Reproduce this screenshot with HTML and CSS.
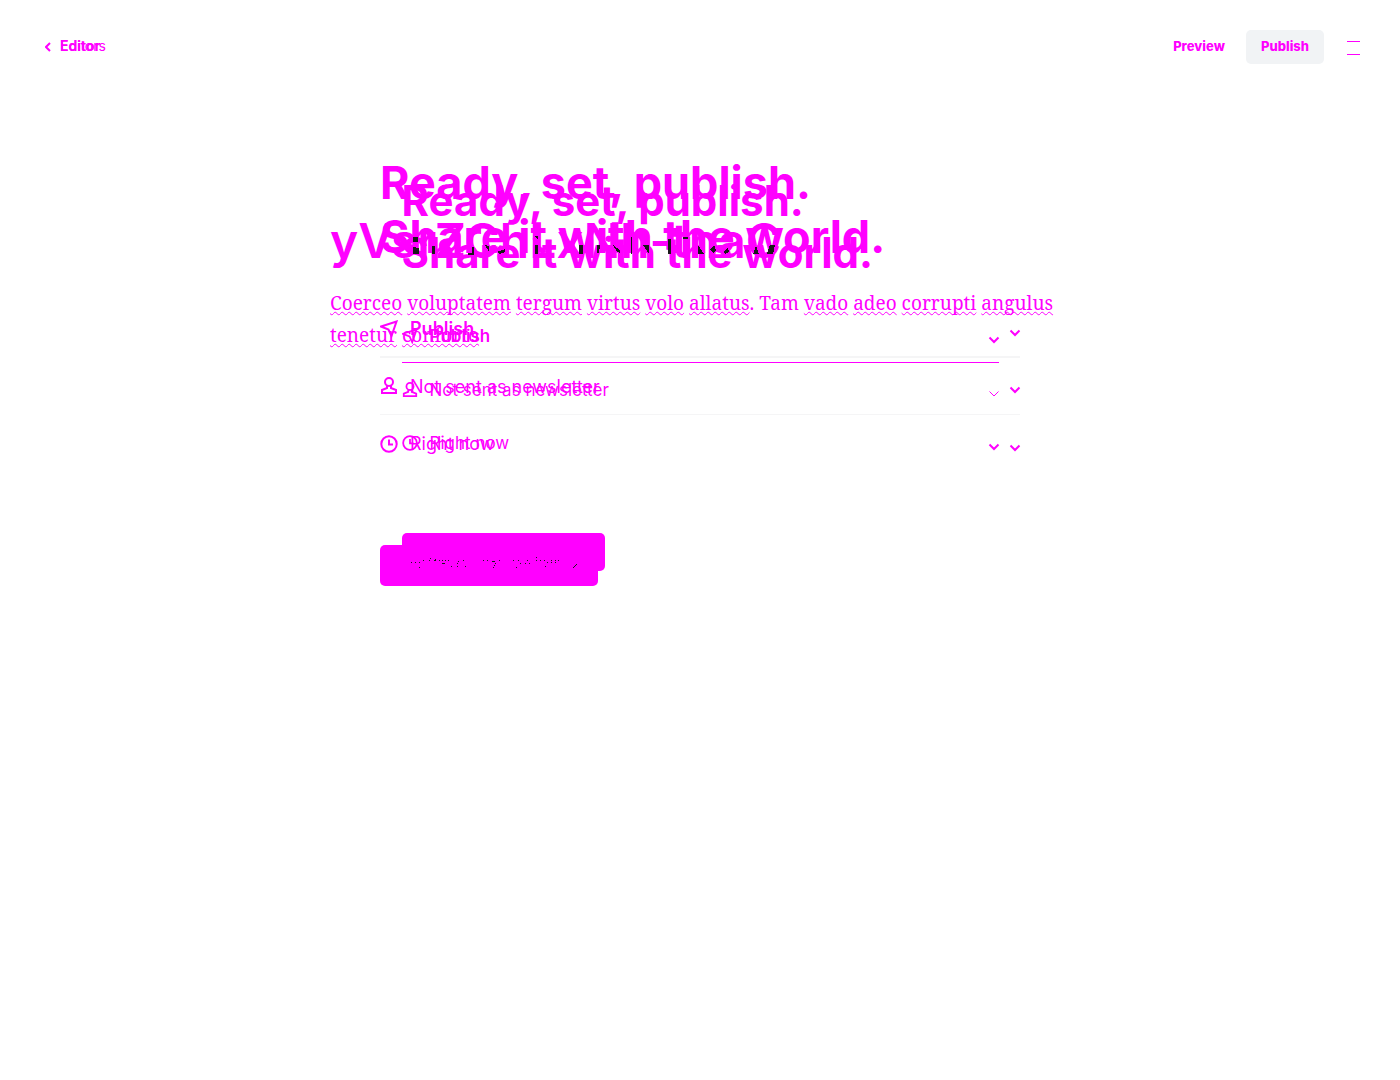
FILE: index.html
```html
<!DOCTYPE html>
<html lang="en">
<head>
<meta charset="utf-8">
<title>Publish</title>
<meta name="viewport" content="width=device-width, initial-scale=1">
<link rel="stylesheet" href="styles.css">
</head>
<body>
<svg class="sprite" aria-hidden="true">
  <symbol id="chevron" viewBox="0 0 12 8"><path d="M1.500 1.500 L6 6 L10.500 1.500"/></symbol>
  <symbol id="send" viewBox="0 0 18 18"><path d="M1 6.500 L16.500 1.500 L11.500 16 L8.500 9.500 Z"/></symbol>
  <symbol id="member" viewBox="0 0 18 18"><circle cx="9" cy="5" r="4"/><path d="M7 9 V11 L2 13 V16 H16 V13 L11 11 V9"/></symbol>
  <symbol id="clock" viewBox="0 0 18 18"><circle cx="9" cy="9" r="7.700"/><path d="M9 4.500 V9.500 H13"/></symbol>
</svg>
<header class="topbar">
  <nav class="back">
    <svg class="back-icon" viewBox="0 0 6 10"><path d="M5 1 L1 5 L5 9"/></svg>
    <div class="stack">
      <a class="layer crumb-strong" href="#editor">Editor</a>
      <a class="layer crumb" href="#editors">Editors</a>
    </div>
  </nav>
  <div class="actions">
    <button class="button" type="button">Preview</button>
    <button class="button filled" type="button">Publish</button>
    <button class="menu" type="button" aria-label="Settings"><span></span><span></span></button>
  </div>
</header>
<main class="stack canvas">
  <article class="layer post">
    <h1 class="post-title">yVsrZChLxNh-tnaC</h1>
    <p class="excerpt"><u>Coerceo</u> <u>voluptatem</u> <u>tergum</u> <u>virtus</u> <u>volo</u> <u>allatus</u>. Tam <u>vado</u> <u>adeo</u> <u>corrupti</u> <u>angulus</u> <u>tenetur</u> <u>conforto</u></p>
  </article>
  <section class="layer flow large">
    <h2 class="headline">Ready, set, publish.<br>Share it with the world.</h2>
    <div class="options">
      <button class="option" type="button"><svg class="icon"><use href="#send"/></svg><span class="strong">Publish</span><svg class="arrow"><use href="#chevron"/></svg></button>
      <button class="option" type="button"><svg class="icon"><use href="#member"/></svg><span>Not sent as newsletter</span><svg class="arrow"><use href="#chevron"/></svg></button>
      <button class="option" type="button"><svg class="icon"><use href="#clock"/></svg><span>Right now</span><svg class="arrow"><use href="#chevron"/></svg></button>
    </div>
    <button class="continue" type="button">Continue, final review →</button>
  </section>
  <section class="layer flow small">
    <h2 class="headline">Ready, set, publish.<br>Share it with the world.</h2>
    <div class="options">
      <button class="option" type="button"><svg class="icon"><use href="#send"/></svg><span class="strong">Publish</span><svg class="arrow"><use href="#chevron"/></svg></button>
      <button class="option" type="button"><svg class="icon"><use href="#member"/></svg><span>Not sent as newsletter</span><svg class="arrow thin"><use href="#chevron"/></svg></button>
      <button class="option" type="button"><svg class="icon"><use href="#clock"/></svg><span>Right now</span><svg class="arrow"><use href="#chevron"/></svg></button>
    </div>
    <button class="continue" type="button">Continue, final review →</button>
  </section>
  <svg class="layer marks" viewBox="0 0 740 380" aria-hidden="true">
    <path d="M83 22h5v5h-5z M83 32l6 1v6h-6z M102 31h3v8h-3z M138 38h4v-6h2v8h-6z M155 30l4 1v6z M167 37l8-3v3l-6 2z M204 21h4v4z M205 30h3v9h-3z M249 30h4v9h-4z M267 30h3l-1 8h-2z M283 30l7 5v3l-3-1z M301 22h1v17h-1z M313 30h6v9z M338 24h3v15h-3z M353 22h5v2h-5z M368 30l6 9h-6z M380 34l4-4 2 5-3 3z M393 37l5-5 1 5-4 2z M423 39l3-8 3 8z M437 39l3-9h5l-2 9z"/>
    <path d="M81 349h1v1h-1z M85 349h1v1h-1z M89 349h1v1h-1z M93 347h1v1h-1z M99 347h1v1h-1z M104 347h2v1h-2z M109 347h1v1h-1z M112 347h1v1h-1z M115 347h1v1h-1z M118 347h1v1h-1z M100 345h1v1h-1z M105 346h1v1h-1z M112 350h3v1h-3z M89 354h1v1h-1z M128 348h1v1h-1z M127 350h1v1h-1z M133 347h1v1h-1z M121 353h1v1h-1z M127 353h1v1h-1z M135 353h1v1h-1z M153 347h1v1h-1z M157 347h1v1h-1z M162 348h3v1h-3z M165 350h1v1h-1z M164 352h1v1h-1z M163 354h1v1h-1z M169 347h1v1h-1z M183 347h1v1h-1z M188 347h1v1h-1z M190 350h1v1h-1z M195 350h1v1h-1z M199 350h1v1h-1z M186 354h1v1h-1z M197 347h1v1h-1z M206 344h1v1h-1z M206 347h1v1h-1z M210 347h1v1h-1z M214 347h1v1h-1z M221 347h1v1h-1z M225 347h1v1h-1z M228 347h1v1h-1z M217 349h1v1h-1z M221 349h1v1h-1z M225 349h1v1h-1z M215 353h1v1h-1z M242 355l4-4h1l-4 4z"/>
  </svg>
</main>
</body>
</html>
```

FILE: styles.css
```css
:root { --ink: #ff00ff; --line: #f5f5f6; }
* { box-sizing: border-box; }
body { margin: 0; background: #fff; color: var(--ink); font-family: Inter, "Liberation Sans", sans-serif; }
button { border: 0; padding: 0; background: none; color: inherit; font: inherit; cursor: pointer; }
a { color: inherit; text-decoration: none; }
svg { fill: none; stroke: var(--ink); stroke-width: 2; }
.sprite { display: none; }
.stack { display: grid; align-items: start; }
.layer { grid-area: 1 / 1; }

.topbar { display: flex; justify-content: space-between; align-items: center; padding: 30px 40px 0 45px; }
.back { display: flex; align-items: center; gap: 9px; font-size: 14px; line-height: 18px; }
.back .stack { padding-bottom: 2px; }
.back-icon { width: 6px; height: 10px; }
.crumb-strong { font-weight: 700; }
.actions { display: flex; align-items: center; }
.button { width: 78px; height: 34px; padding-bottom: 2px; margin-right: 8px; border-radius: 5px; font-size: 13px; line-height: 32px; font-weight: 800; }
.filled { background: #f1f3f5; margin-right: 23px; }
.menu { display: grid; gap: 12px; width: 13px; padding-top: 2px; }
.menu span { height: 1px; background: var(--ink); }

.canvas { justify-items: center; }
.post { width: 740px; padding-top: 147px; }
.post-title { margin: 0 0 16px; font-size: 48px; line-height: 60px; font-weight: 600; }
.excerpt { margin: 0; font: 19px/32px "Noto Serif", Georgia, "Liberation Serif", serif; }
.excerpt u { text-decoration: underline wavy 1px; text-underline-offset: 1px; text-decoration-skip-ink: none; }

.headline { margin: 0; font-weight: 700; }
.option { display: flex; align-items: center; width: 100%; text-align: left; gap: 12px; }
.strong { font-weight: 600; }
.arrow { width: 12px; height: 16px; padding-top: 8px; margin-left: auto; margin-right: -1px; }
.thin { stroke-width: 1; }
.continue { background: var(--ink); border-radius: 5px; font-weight: 500; }

.large { width: 640px; padding-top: 92px; }
.large .headline { font-size: 45px; line-height: 54px; }
.large .options { padding-top: 37px; }
.large .option { height: 57px; font-size: 18px; }
.large .option:nth-child(1) { border-bottom: 2px solid var(--line); }
.large .option:nth-child(2) { border-bottom: 1px solid var(--line); }
.large .icon { width: 18px; height: 18px; }
.large .continue { width: 218px; height: 41px; margin-top: 73px; font-size: 16px; }

.small { width: 597px; padding-top: 111px; }
.small .headline { font-size: 42px; line-height: 52px; }
.small .options { padding-top: 31px; }
.small .option { height: 53px; font-size: 17px; }
.small .icon { width: 16px; height: 16px; }
.small .option:first-child { border-bottom: 1px solid var(--ink); }
.small .continue { width: 203px; height: 38px; margin-top: 64px; font-size: 15px; }

.marks { width: 740px; height: 380px; margin-top: 151px; pointer-events: none; }
.marks path { fill: #1a1a1a; stroke: none; shape-rendering: crispEdges; }
.marks path + path { transform: translateY(-2px); }
```
